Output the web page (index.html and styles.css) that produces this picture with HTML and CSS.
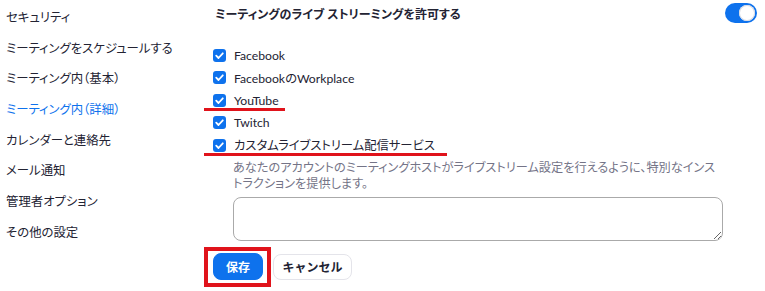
FILE: index.html
```html
<!DOCTYPE html>
<html lang="ja">
<head>
    <meta charset="UTF-8">
    <title>設定 - ミーティング内（詳細）</title>
    <link rel="stylesheet" href="styles.css">
</head>
<body>

    <div class="page">
        <ul class="sidebar">
            <li class="nav-item">セキュリティ</li>
            <li class="nav-item">ミーティングをスケジュールする</li>
            <li class="nav-item">ミーティング内（基本）</li>
            <li class="nav-item active">ミーティング内（詳細）</li>
            <li class="nav-item">カレンダーと連絡先</li>
            <li class="nav-item">メール通知</li>
            <li class="nav-item">管理者オプション</li>
            <li class="nav-item">その他の設定</li>
        </ul>

        <div class="content">
            <div class="setting-header">
                <div class="setting-title">ミーティングのライブ ストリーミングを許可する</div>
                <div class="toggle on"><span class="knob"></span></div>
            </div>

            <div class="options">
                <label class="option">
                    <span class="checkbox"><svg viewBox="0 0 13 13"><path d="M3.2 6.7 L5.5 9 L9.8 4.3" /></svg></span>
                    <span>Facebook</span>
                </label>
                <label class="option">
                    <span class="checkbox"><svg viewBox="0 0 13 13"><path d="M3.2 6.7 L5.5 9 L9.8 4.3" /></svg></span>
                    <span>Facebook<span class="ja">の</span>Workplace</span>
                </label>
                <label class="option marked short">
                    <span class="checkbox"><svg viewBox="0 0 13 13"><path d="M3.2 6.7 L5.5 9 L9.8 4.3" /></svg></span>
                    <span>YouTube</span>
                </label>
                <label class="option">
                    <span class="checkbox"><svg viewBox="0 0 13 13"><path d="M3.2 6.7 L5.5 9 L9.8 4.3" /></svg></span>
                    <span>Twitch</span>
                </label>
                <label class="option marked long">
                    <span class="checkbox"><svg viewBox="0 0 13 13"><path d="M3.2 6.7 L5.5 9 L9.8 4.3" /></svg></span>
                    <span class="ja">カスタムライブストリーム配信サービス</span>
                </label>
            </div>

            <div class="custom-block">
                <p class="hint">あなたのアカウントのミーティングホストがライブストリーム設定を行えるように、特別なインストラクションを提供します。</p>
                <textarea class="instructions"></textarea>
            </div>

            <div class="actions">
                <div class="highlight">
                    <button class="btn primary">保存</button>
                </div>
                <button class="btn">キャンセル</button>
            </div>
        </div>
    </div>

</body>
</html>
```

FILE: styles.css
```css
body {
    margin: 0;
    background: #fff;
    font-family: 'Lato', 'Noto Sans CJK JP', sans-serif;
    font-feature-settings: "palt";
    color: #232333;
}

.page {
    display: flex;
    width: 765px;
    height: 291px;
    overflow: hidden;
}

/* left menu */
.sidebar {
    list-style: none;
    margin: 0;
    padding: 3px 0 0 6px;
    width: 207px;
    flex-shrink: 0;
}

.nav-item {
    height: 30.7px;
    line-height: 30.7px;
    font-size: 12.4px;
    color: #232333;
    white-space: nowrap;
}

.nav-item.active {
    color: #0e72ed;
}

/* right panel */
.content {
    flex: 1;
    padding: 2px 8px 0 0;
}

.setting-header {
    display: flex;
    justify-content: space-between;
    align-items: center;
    height: 22px;
}

.setting-title {
    font-size: 12px;
    font-weight: bold;
    padding-left: 2px;
}

.toggle {
    width: 32px;
    height: 20px;
    border-radius: 10px;
    background: #0e72ed;
    position: relative;
}

.toggle .knob {
    position: absolute;
    top: 2px;
    right: 2px;
    width: 16px;
    height: 16px;
    border-radius: 50%;
    background: #fff;
    box-shadow: inset 0 0 0 1px #d8dbe4;
}

.options {
    margin-top: 20px;
}

.option {
    display: flex;
    align-items: center;
    gap: 8px;
    height: 22.5px;
    font-size: 12.2px;
    position: relative;
}

.option .ja {
    font-size: 12.3px;
}

.checkbox {
    width: 13px;
    height: 13px;
    border-radius: 3px;
    background: #0e72ed;
    display: flex;
}

.checkbox svg {
    width: 13px;
    height: 13px;
}

.checkbox path {
    fill: none;
    stroke: #fff;
    stroke-width: 1.8;
    stroke-linecap: round;
    stroke-linejoin: round;
}

/* red annotation lines */
.option.marked::after {
    content: "";
    position: absolute;
    left: -9px;
    bottom: 1px;
    height: 3px;
    background: #e0131b;
}

.option.short::after {
    width: 81px;
}

.option.long::after {
    width: 243px;
}

.custom-block {
    padding-left: 20px;
    margin-top: 3px;
}

.hint {
    margin: 0;
    font-size: 12.2px;
    line-height: 16px;
    color: #747487;
    width: 490px;
}

.instructions {
    display: block;
    margin-top: 5px;
    width: 490px;
    height: 44px;
    box-sizing: border-box;
    border: 1px solid #aaaaaa;
    border-radius: 8px;
    resize: vertical;
}

.actions {
    display: flex;
    align-items: center;
    gap: 2px;
    margin-top: 6px;
    margin-left: -9px;
}

.highlight {
    border: 4px solid #e0131b;
    padding: 2px 4px 3px 5px;
}

.btn {
    font-family: 'Lato', 'Noto Sans CJK JP', sans-serif;
    font-size: 12px;
    font-weight: bold;
    height: 26px;
    padding: 0 14px;
    border: 1px solid #e4e4ea;
    border-radius: 8px;
    background: #fff;
    color: #232333;
}

.btn.primary {
    width: 50px;
    height: 27px;
    padding: 0;
    border-color: #0e72ed;
    background: #0e72ed;
    color: #fff;
}

.actions > .btn {
    width: 79px;
    padding: 0;
}
```
